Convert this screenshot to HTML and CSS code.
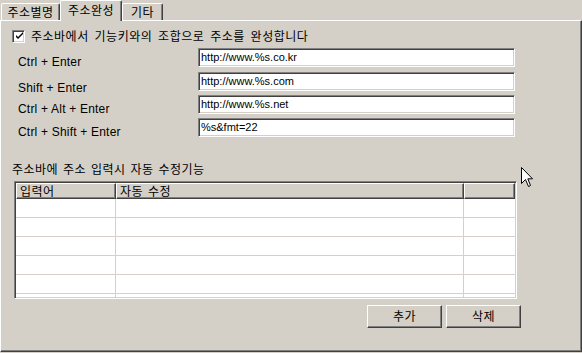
FILE: index.html
```html
<!DOCTYPE html>
<html lang="ko">
<head>
<meta charset="utf-8">
<link rel="stylesheet" href="styles.css">
</head>
<body>
<div class="dialog">
  <div class="tabs">
    <div class="tab tab-1">주소별명</div>
    <div class="tab tab-active">주소완성</div>
    <div class="tab tab-3">기타</div>
  </div>
  <div class="panel">
    <div class="check-row">
      <span class="checkbox"><svg width="9" height="9" viewBox="0 0 9 9"><path d="M1 3 L1 5 L3 7 L8 2 L8 0 L3 5 Z" fill="#000"/></svg></span>
      <span class="check-label">주소바에서 기능키와의 조합으로 주소를 완성합니다</span>
    </div>
    <div class="form">
      <div class="lbl lbl-1">Ctrl + Enter</div>
      <div class="field">http://www.%s.co.kr</div>
      <div class="lbl lbl-2">Shift + Enter</div>
      <div class="field">http://www.%s.com</div>
      <div class="lbl lbl-3">Ctrl + Alt + Enter</div>
      <div class="field">http://www.%s.net</div>
      <div class="lbl lbl-4">Ctrl + Shift + Enter</div>
      <div class="field">%s&amp;fmt=22</div>
    </div>
    <div class="section-label">주소바에 주소 입력시 자동 수정기능</div>
    <div class="list">
      <div class="list-head">
        <div class="hcell c1">입력어</div>
        <div class="hcell c2">자동 수정</div>
        <div class="hcell c3"></div>
      </div>
      <div class="list-body">
        <div class="cell c1"></div><div class="cell c2"></div><div class="cell c3"></div>
        <div class="cell c1"></div><div class="cell c2"></div><div class="cell c3"></div>
        <div class="cell c1"></div><div class="cell c2"></div><div class="cell c3"></div>
        <div class="cell c1"></div><div class="cell c2"></div><div class="cell c3"></div>
        <div class="cell c1"></div><div class="cell c2"></div><div class="cell c3"></div>
        <div class="cell c1"></div><div class="cell c2"></div><div class="cell c3"></div>
      </div>
    </div>
    <div class="buttons">
      <div class="btn">추가</div>
      <div class="btn">삭제</div>
    </div>
  </div>
  <svg class="cursor" width="13" height="21" viewBox="0 0 13 21"><path d="M0.5 0.5 L0.5 16.5 L4.5 12.5 L7.5 19.5 L9.5 18.5 L6.8 11.8 L11.5 11.8 Z" fill="#fff" stroke="#000" stroke-width="1"/></svg>
</div>
</body>
</html>
```
FILE: styles.css
```css
html, body {
  margin: 0;
  padding: 0;
  background: #d4d0c8;
}
body {
  width: 582px;
  height: 353px;
  overflow: hidden;
  font-family: "Noto Sans CJK KR", "Liberation Sans", sans-serif;
  font-size: 12px;
  letter-spacing: 0.5px;
  color: #000;
}
.dialog {
  position: relative;
  width: 582px;
  height: 353px;
}
.tabs {
  display: flex;
  align-items: flex-end;
  height: 21px;
  margin-bottom: -1px;
  padding-left: 1px;
  position: relative;
  z-index: 1;
}
.tab {
  box-sizing: border-box;
  height: 17px;
  margin-bottom: 1px;
  background: #d4d0c8;
  border-top: 1px solid #fff;
  border-left: 1px solid #fff;
  border-right: 1px solid #404040;
  box-shadow: inset -1px 0 #808080;
  border-radius: 2px 2px 0 0;
  text-align: center;
  line-height: 15px;
}
.tab-1 { width: 59px; }
.tab-active {
  width: 62px;
  height: 21px;
  margin-bottom: 0;
  line-height: 17px;
}
.tab-3 { width: 41px; }
.panel {
  box-sizing: border-box;
  width: 582px;
  height: 332px;
  border-top: 1px solid #fff;
  border-left: 1px solid #fff;
  border-right: 1px solid #404040;
  border-bottom: 1px solid #404040;
  box-shadow: inset -1px -1px #808080;
  display: flex;
  flex-direction: column;
}
.check-row {
  display: flex;
  align-items: center;
  height: 14px;
  margin-top: 8px;
  margin-left: 11px;
}
.checkbox {
  box-sizing: border-box;
  width: 13px;
  height: 13px;
  background: #fff;
  border-top: 1px solid #808080;
  border-left: 1px solid #808080;
  border-right: 1px solid #fff;
  border-bottom: 1px solid #fff;
  box-shadow: inset 1px 1px #404040, inset -1px -1px #d4d0c8;
  display: flex;
  align-items: center;
  justify-content: center;
}
.checkbox svg { display: block; margin-left: 1px; margin-top: 1px; }
.check-label {
  margin-left: 6px;
  line-height: 14px;
  word-spacing: 2px;
}
.form {
  display: grid;
  grid-template-columns: 180px 317px;
  grid-template-rows: 20px 19px 19px 19px;
  row-gap: 4px;
  align-items: start;
  margin-top: 5px;
  margin-left: 17px;
}
.lbl {
  font-family: "Liberation Sans", sans-serif;
  font-size: 12px;
  line-height: 14px;
  letter-spacing: 0.2px;
  white-space: nowrap;
}
.lbl-1 { padding-top: 7px; }
.lbl-2 { padding-top: 9px; }
.lbl-3 { padding-top: 7px; }
.lbl-4 { padding-top: 7px; }
.field {
  box-sizing: border-box;
  height: 19px;
  background: #fff;
  border-top: 1px solid #808080;
  border-left: 1px solid #808080;
  border-right: 1px solid #fff;
  border-bottom: 1px solid #fff;
  box-shadow: inset 1px 1px #404040, inset -1px -1px #d4d0c8;
  font-family: "Liberation Sans", sans-serif;
  font-size: 11px;
  letter-spacing: 0;
  line-height: 17px;
  padding-left: 2px;
  white-space: nowrap;
}
.section-label {
  margin-top: 25px;
  margin-left: 11px;
  line-height: 14px;
  word-spacing: 1px;
}
.list {
  box-sizing: border-box;
  width: 503px;
  height: 118px;
  margin-top: 5px;
  margin-left: 13px;
  border-top: 1px solid #808080;
  border-left: 1px solid #808080;
  border-right: 1px solid #fff;
  border-bottom: 1px solid #fff;
  box-shadow: inset 1px 1px #404040, inset -1px -1px #d4d0c8;
  padding: 1px;
  overflow: hidden;
  background: #fff;
}
.list-head {
  display: grid;
  grid-template-columns: 100px 348px 51px;
  height: 16px;
}
.hcell {
  box-sizing: border-box;
  height: 16px;
  background: #d4d0c8;
  border-top: 1px solid #fff;
  border-left: 1px solid #fff;
  border-right: 1px solid #404040;
  border-bottom: 1px solid #404040;
  box-shadow: inset -1px -1px #808080;
  line-height: 13px;
  padding-left: 3px;
  word-spacing: 1px;
}
.list-body {
  display: grid;
  grid-template-columns: 100px 348px 51px;
  grid-auto-rows: 19px;
}
.cell {
  box-sizing: border-box;
  border-right: 1px solid #d4d0c8;
  border-bottom: 1px solid #d4d0c8;
}
.cell.c3 { border-right: none; }
.buttons {
  display: flex;
  justify-content: flex-end;
  gap: 4px;
  margin-top: 6px;
  margin-right: 60px;
}
.btn {
  box-sizing: border-box;
  width: 75px;
  height: 23px;
  border-top: 1px solid #fff;
  border-left: 1px solid #fff;
  border-right: 1px solid #404040;
  border-bottom: 1px solid #404040;
  box-shadow: inset -1px -1px #808080;
  text-align: center;
  line-height: 20px;
}
.cursor {
  position: absolute;
  left: 521px;
  top: 167px;
}
```
